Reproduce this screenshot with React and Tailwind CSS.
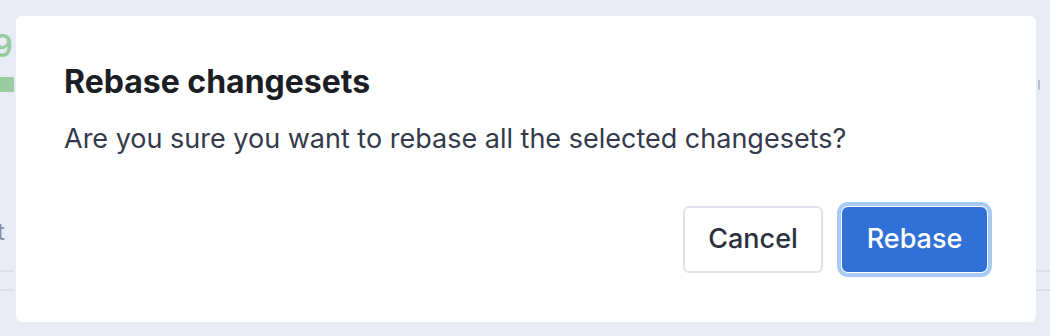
export default function App() {
  return (
    <div
      className="relative h-[336px] w-[1050px] overflow-hidden bg-[#e9ecf5]"
      style={{ fontFamily: 'Inter, "Noto Sans", sans-serif' }}
    >
      {/* Seite hinter dem Dialog */}
      <div className="flex h-full justify-between">
        <div className="flex w-[14px] flex-col overflow-hidden">
          <span className="ml-[-7px] mt-[30px] text-[31px] font-semibold leading-[32px] text-[#9acb9f]">9</span>
          <div className="mt-[15px] h-[15px] w-[14px] bg-[#9ccca2]" />
          <span className="ml-[-3px] mt-[126px] text-[24px] leading-[28px] text-[#878d9d]">t</span>
          <div className="mt-[24px] h-[2px] bg-[#dcdfe8]" />
          <div className="mt-[17px] h-[2px] bg-[#dcdfe8]" />
        </div>
        <div className="flex w-[14px] flex-col">
          <div className="ml-[2px] mt-[80px] h-[10px] w-[2px] rounded bg-[#b9bfcc]" />
          <div className="mt-[180px] h-[2px] bg-[#dcdfe8]" />
          <div className="mt-[17px] h-[2px] bg-[#dcdfe8]" />
        </div>
      </div>

      {/* Dialog-Overlay */}
      <div className="absolute inset-0 pt-4 pl-4 pr-[14px] pb-[14px]">
        <div className="flex h-full flex-col rounded-md bg-white pl-12 pr-[49px] pt-[46px] pb-[49px]">
          <h2 className="text-[32px] font-bold leading-[40px] text-[#1c1e26]">Rebase changesets</h2>
          <p className="mt-[19px] text-[27px] leading-[36px] text-[#343a4b]">
            Are you sure you want to rebase all the selected changesets?
          </p>
          <div className="mt-auto flex justify-end gap-[19px]">
            <button className="h-[67px] w-[140px] rounded-md border-2 border-[#dfe3ee] bg-white text-[27px] font-medium text-[#2c3140]">
              Cancel
            </button>
            <button className="h-[65px] w-[145px] self-center rounded-md bg-[#3170d6] text-[27px] font-medium text-white ring-4 ring-[#a7cbf6] ring-offset-1">
              Rebase
            </button>
          </div>
        </div>
      </div>
    </div>
  );
}
